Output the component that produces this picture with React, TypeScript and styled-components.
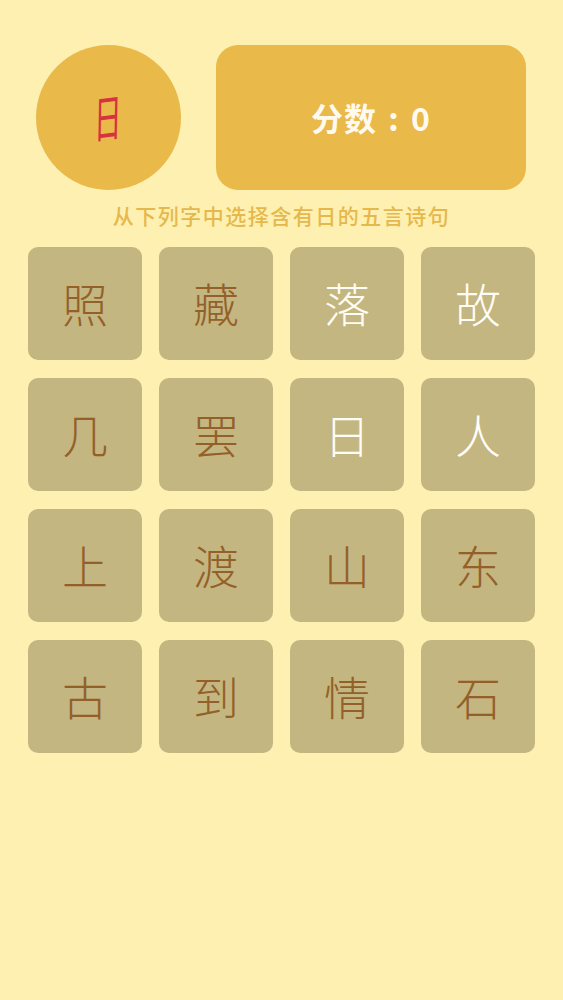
import React from "react";
import styled, { createGlobalStyle } from "styled-components";

const Global = createGlobalStyle`
  html, body {
    margin: 0;
    padding: 0;
    background: #fdf0b1;
  }
  body {
    font-family: "Noto Sans CJK SC", "Noto Sans", sans-serif;
  }
`;

const Page = styled.div`
  width: 563px;
  min-height: 1000px;
  background: #fdf0b1;
  box-sizing: border-box;
  padding-top: 45px;
  display: flex;
  flex-direction: column;
`;

const Header = styled.div`
  display: flex;
  align-items: center;
  padding: 0 37px 0 36px;
  gap: 35px;
`;

const Badge = styled.div`
  width: 145px;
  height: 145px;
  border-radius: 50%;
  background: #e9b94a;
  display: flex;
  align-items: center;
  justify-content: center;
  flex-shrink: 0;
`;

const BadgeChar = styled.span`
  color: #d6323f;
  font-family: "Noto Sans CJK SC", sans-serif;
  font-weight: 400;
  font-size: 50px;
  line-height: 1;
  display: inline-block;
  transform: translate(-1px, -3px) scaleX(0.56) rotate(-4deg) skewX(-6deg);
`;

const ScoreBox = styled.div`
  flex: 1;
  height: 145px;
  border-radius: 22px;
  background: #e9b94a;
  display: flex;
  align-items: center;
  justify-content: center;
  color: #fffaf0;
  font-size: 32px;
  font-weight: 700;
  letter-spacing: 1px;
  padding-bottom: 2px;
  box-sizing: border-box;
`;

const Colon = styled.span`
  display: inline-block;
  width: 34px;
  text-align: center;
`;

const Hint = styled.div`
  margin-top: 11px;
  text-align: center;
  color: #e6b84c;
  font-size: 21px;
  font-weight: 500;
  letter-spacing: 1.5px;
  line-height: 28px;
`;

const Grid = styled.div`
  margin: 18px 28px 0 28px;
  display: grid;
  grid-template-columns: repeat(4, 114px);
  grid-auto-rows: 113px;
  column-gap: 17px;
  row-gap: 18px;
`;

const Tile = styled.div<{ $picked?: boolean }>`
  background: #c4b680;
  border-radius: 10px;
  display: flex;
  align-items: center;
  justify-content: center;
  color: ${(p) => (p.$picked ? "#fffdf5" : "#93602a")};
  font-size: 46px;
  font-weight: 300;
  line-height: 1;
  padding-bottom: 4px;
  box-sizing: border-box;
`;

const tiles: { c: string; w?: boolean }[] = [
  { c: "照" },
  { c: "藏" },
  { c: "落", w: true },
  { c: "故", w: true },
  { c: "几" },
  { c: "罢" },
  { c: "日", w: true },
  { c: "人", w: true },
  { c: "上" },
  { c: "渡" },
  { c: "山" },
  { c: "东" },
  { c: "古" },
  { c: "到" },
  { c: "情" },
  { c: "石" },
];

export default function App() {
  return (
    <Page>
      <Global />
      <Header>
        <Badge>
          <BadgeChar>日</BadgeChar>
        </Badge>
        <ScoreBox>
          分数<Colon>:</Colon>0
        </ScoreBox>
      </Header>
      <Hint>从下列字中选择含有日的五言诗句</Hint>
      <Grid>
        {tiles.map((t, i) => (
          <Tile key={i} $picked={t.w}>
            {t.c}
          </Tile>
        ))}
      </Grid>
    </Page>
  );
}
